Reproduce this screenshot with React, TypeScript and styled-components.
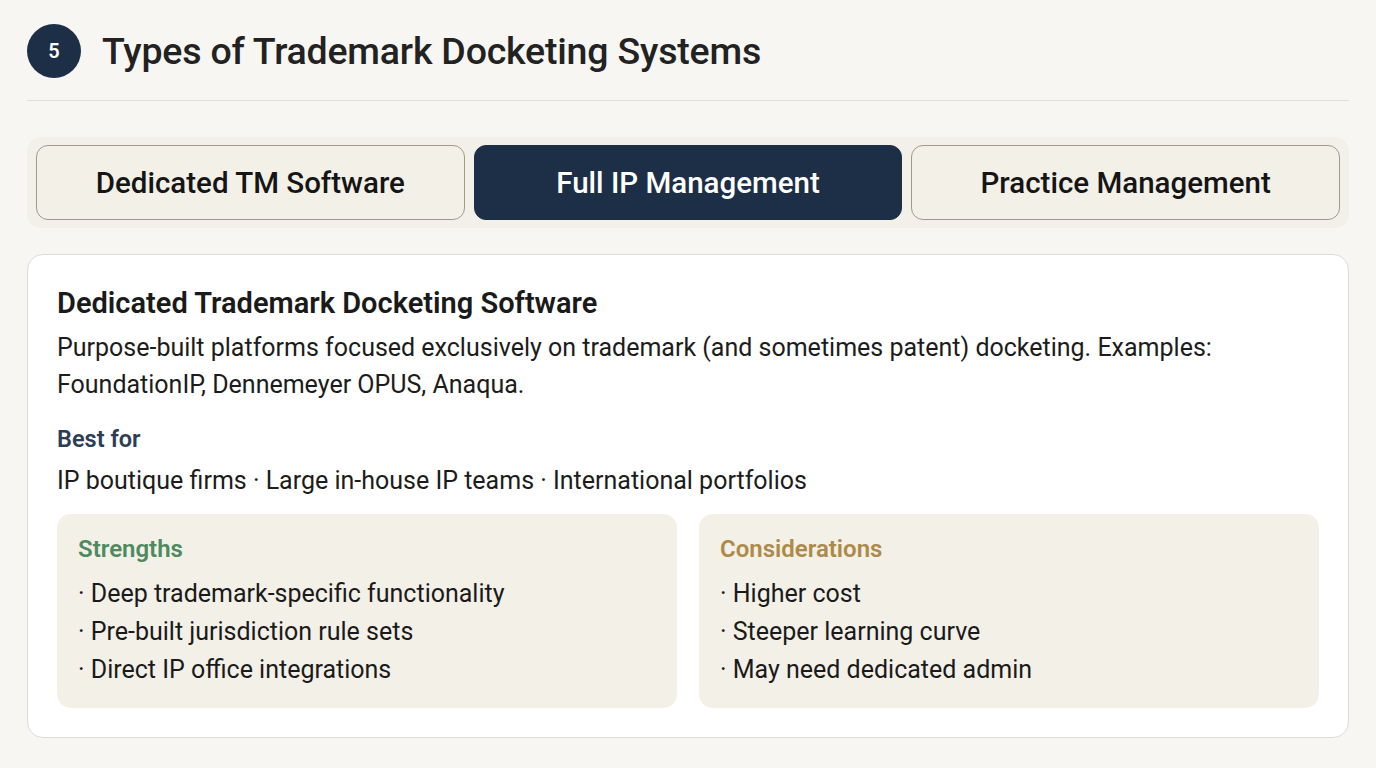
import React from "react";
import styled, { createGlobalStyle } from "styled-components";

const Global = createGlobalStyle`
  html, body { margin: 0; padding: 0; background: #f7f6f2; }
  body { font-family: Roboto, "Liberation Sans", sans-serif; color: #1c1c1c; }
  * { box-sizing: border-box; }
`;

const Page = styled.div`
  padding: 24px 27px 30px 27px;
  display: flex;
  flex-direction: column;
`;

const Header = styled.div`
  display: flex;
  align-items: center;
  gap: 21px;
  padding-bottom: 22px;
  border-bottom: 1.5px solid #e0ded8;
`;

const Badge = styled.div`
  width: 54px;
  height: 54px;
  border-radius: 50%;
  background: #1d2e47;
  color: #fff;
  display: flex;
  align-items: center;
  justify-content: center;
  font-size: 20px;
  font-weight: 600;
`;

const Title = styled.h1`
  margin: 0;
  font-size: 37.5px;
  line-height: 54px;
  font-weight: 500;
  color: #222;
  letter-spacing: -0.2px;
`;

const TabBar = styled.div`
  margin-top: 36px;
  display: grid;
  grid-template-columns: repeat(3, 1fr);
  gap: 9px;
  padding: 8px 9px;
  background: #f2f0e9;
  border-radius: 14px;
`;

const Tab = styled.button<{ $active?: boolean }>`
  height: 75px;
  border-radius: 12px;
  font-family: inherit;
  font-size: 29.5px;
  font-weight: 500;
  cursor: pointer;
  border: ${(p) => (p.$active ? "1.5px solid #1d2e47" : "1.5px solid #a09a8e")};
  background: ${(p) => (p.$active ? "#1d2e47" : "#f3f0e8")};
  color: ${(p) => (p.$active ? "#ffffff" : "#151515")};
`;

const Card = styled.div`
  margin-top: 26px;
  background: #fff;
  border: 1.5px solid #dedcd6;
  border-radius: 16px;
  padding: 30px 29px 29px 29px;
`;

const CardTitle = styled.h2`
  margin: 0;
  font-size: 29px;
  font-weight: 600;
  color: #1a1a1a;
  line-height: 36px;
`;

const Desc = styled.p`
  margin: 8px 0 0 0;
  font-size: 25px;
  line-height: 37px;
  color: #1c1c1c;
`;

const Label = styled.div`
  margin-top: 21px;
  font-size: 23.5px;
  font-weight: 600;
  color: #2c3d56;
  line-height: 30px;
`;

const BestFor = styled.div`
  margin-top: 11px;
  font-size: 25px;
  line-height: 32px;
`;

const Columns = styled.div`
  margin-top: 17px;
  display: grid;
  grid-template-columns: 1fr 1fr;
  gap: 22px;
`;

const Box = styled.div`
  background: #f3f0e8;
  border-radius: 14px;
  padding: 20px 21px 19px 21px;
`;

const BoxTitle = styled.div<{ $color: string }>`
  font-size: 24px;
  font-weight: 600;
  color: ${(p) => p.$color};
  line-height: 30px;
`;

const List = styled.ul`
  margin: 11px 0 0 0;
  padding: 0;
  list-style: none;
`;

const Item = styled.li`
  font-size: 25px;
  line-height: 38px;
  color: #1a1a1a;
`;

export default function App() {
  return (
    <>
      <Global />
      <Page>
        <Header>
          <Badge>5</Badge>
          <Title>Types of Trademark Docketing Systems</Title>
        </Header>
        <TabBar>
          <Tab>Dedicated TM Software</Tab>
          <Tab $active>Full IP Management</Tab>
          <Tab>Practice Management</Tab>
        </TabBar>
        <Card>
          <CardTitle>Dedicated Trademark Docketing Software</CardTitle>
          <Desc>
            Purpose-built platforms focused exclusively on trademark (and sometimes patent) docketing. Examples:
            <br />
            FoundationIP, Dennemeyer OPUS, Anaqua.
          </Desc>
          <Label>Best for</Label>
          <BestFor>IP boutique firms · Large in-house IP teams · International portfolios</BestFor>
          <Columns>
            <Box>
              <BoxTitle $color="#4f8a5f">Strengths</BoxTitle>
              <List>
                <Item>· Deep trademark-specific functionality</Item>
                <Item>· Pre-built jurisdiction rule sets</Item>
                <Item>· Direct IP office integrations</Item>
              </List>
            </Box>
            <Box>
              <BoxTitle $color="#ad8a48">Considerations</BoxTitle>
              <List>
                <Item>· Higher cost</Item>
                <Item>· Steeper learning curve</Item>
                <Item>· May need dedicated admin</Item>
              </List>
            </Box>
          </Columns>
        </Card>
      </Page>
    </>
  );
}
